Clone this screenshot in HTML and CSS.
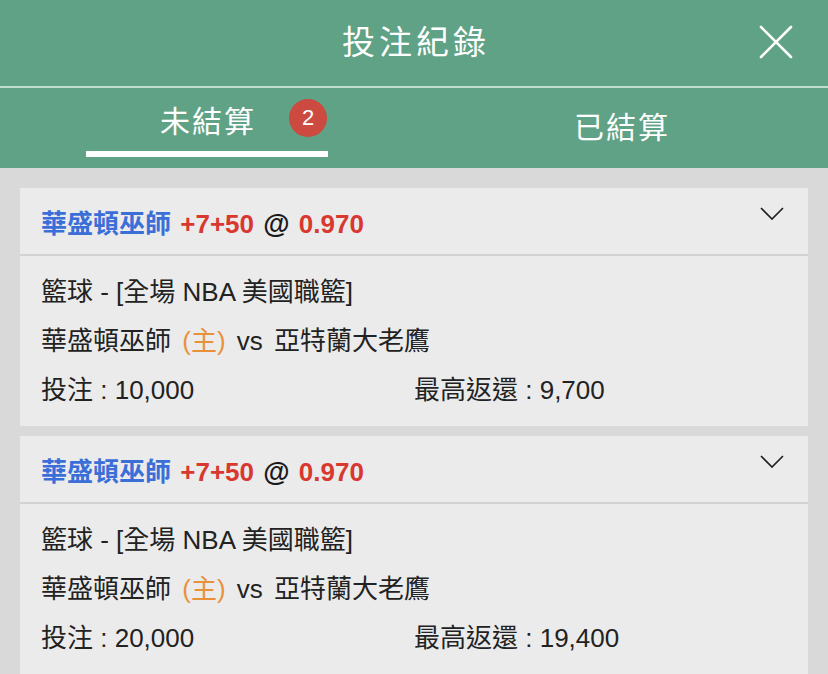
FILE: index.html
```html
<!DOCTYPE html>
<html lang="zh-Hant">
<head>
<meta charset="utf-8">
<title>投注紀錄</title>
<link rel="stylesheet" href="styles.css">
</head>
<body>
<div class="top">
  <header class="titlebar">
    <div></div>
    <h1 class="title">投注紀錄</h1>
    <button class="close" aria-label="close">
      <svg width="34" height="34" viewBox="0 0 34 34"><path d="M2 2 L32 32 M32 2 L2 32" stroke="#fff" stroke-width="2.6" fill="none" stroke-linecap="round"/></svg>
    </button>
  </header>
  <nav class="tabs">
    <div class="tab active">
      <span class="tab-label">未結算<span class="badge">2</span></span>
      <span class="underline"></span>
    </div>
    <div class="tab">
      <span class="tab-label">已結算</span>
    </div>
  </nav>
</div>

<main class="list">
  <section class="card">
    <div class="card-head">
      <div class="pick"><span class="team">華盛頓巫師</span> <span class="odds">+7+50</span> <span class="at">@</span> <span class="odds">0.970</span></div>
      <svg class="chev" width="24" height="13" viewBox="0 0 24 13"><path d="M1 1 L12 12 L23 1" stroke="#222" stroke-width="1.7" fill="none"/></svg>
    </div>
    <div class="card-body">
      <div class="row">籃球 - [全場 NBA 美國職籃]</div>
      <div class="row match">華盛頓巫師 <span class="home">(主)</span> vs 亞特蘭大老鷹</div>
      <div class="row split"><span>投注 : 10,000</span><span>最高返還 : 9,700</span></div>
    </div>
  </section>

  <section class="card">
    <div class="card-head">
      <div class="pick"><span class="team">華盛頓巫師</span> <span class="odds">+7+50</span> <span class="at">@</span> <span class="odds">0.970</span></div>
      <svg class="chev" width="24" height="13" viewBox="0 0 24 13"><path d="M1 1 L12 12 L23 1" stroke="#222" stroke-width="1.7" fill="none"/></svg>
    </div>
    <div class="card-body">
      <div class="row">籃球 - [全場 NBA 美國職籃]</div>
      <div class="row match">華盛頓巫師 <span class="home">(主)</span> vs 亞特蘭大老鷹</div>
      <div class="row split"><span>投注 : 20,000</span><span>最高返還 : 19,400</span></div>
    </div>
  </section>
</main>
</body>
</html>
```

FILE: styles.css
```css
* { box-sizing: border-box; }
html, body {
  margin: 0;
  padding: 0;
  background: #d9d9d9;
  font-family: "Liberation Sans", "Noto Sans CJK TC", sans-serif;
  color: #222;
}
.top {
  background: #5fa285;
}
.titlebar {
  height: 88px;
  display: grid;
  grid-template-columns: 1fr auto 1fr;
  align-items: center;
  border-bottom: 2px solid #c3dcd0;
  padding-bottom: 6px;
}
.title {
  margin: 0 -4px 0 0;
  font-weight: 400;
  font-size: 33px;
  letter-spacing: 4px;
  color: #fff;
}
.close {
  justify-self: end;
  margin-right: 35px;
  margin-top: 4px;
  background: none;
  border: 0;
  padding: 0;
  width: 34px;
  height: 34px;
  display: flex;
}
.tabs {
  height: 80px;
  display: grid;
  grid-template-columns: 1fr 1fr;
}
.tab {
  display: flex;
  flex-direction: column;
  align-items: center;
  justify-content: center;
  color: #fff;
  font-size: 30px;
  letter-spacing: 2px;
}
.tab-label {
  position: relative;
  line-height: 40px;
  margin-right: -2px;
}
.tab.active .tab-label {
  margin-top: 2px;
}
.badge {
  position: absolute;
  left: 129px;
  top: -3px;
  width: 38px;
  height: 38px;
  border-radius: 50%;
  background: #cc4a3f;
  color: #fff;
  font-size: 22px;
  letter-spacing: 0;
  line-height: 38px;
  text-align: center;
}
.underline {
  display: block;
  width: 242px;
  height: 6px;
  background: #fff;
  margin-top: 9px;
}
.list {
  padding: 20px 20px;
  display: flex;
  flex-direction: column;
  gap: 10px;
}
.card {
  background: #ebebeb;
}
.card-head {
  height: 68px;
  display: flex;
  justify-content: space-between;
  align-items: center;
  padding: 0 24px 0 21px;
  border-bottom: 2px solid #d2d2d2;
}
.pick {
  font-size: 26px;
  font-weight: 700;
  word-spacing: 2px;
}
.team { color: #3b6fd8; }
.odds { color: #d9382e; }
.at { color: #1a1a1a; font-size: 27px; }
.chev {
  align-self: flex-start;
  margin-top: 19px;
}
.card-body {
  padding: 12px 21px 11px;
  font-size: 26px;
  line-height: 49px;
}
.match { word-spacing: 4px; }
.home { color: #e8913a; }
.split {
  display: grid;
  grid-template-columns: 1fr 1fr;
}
```
